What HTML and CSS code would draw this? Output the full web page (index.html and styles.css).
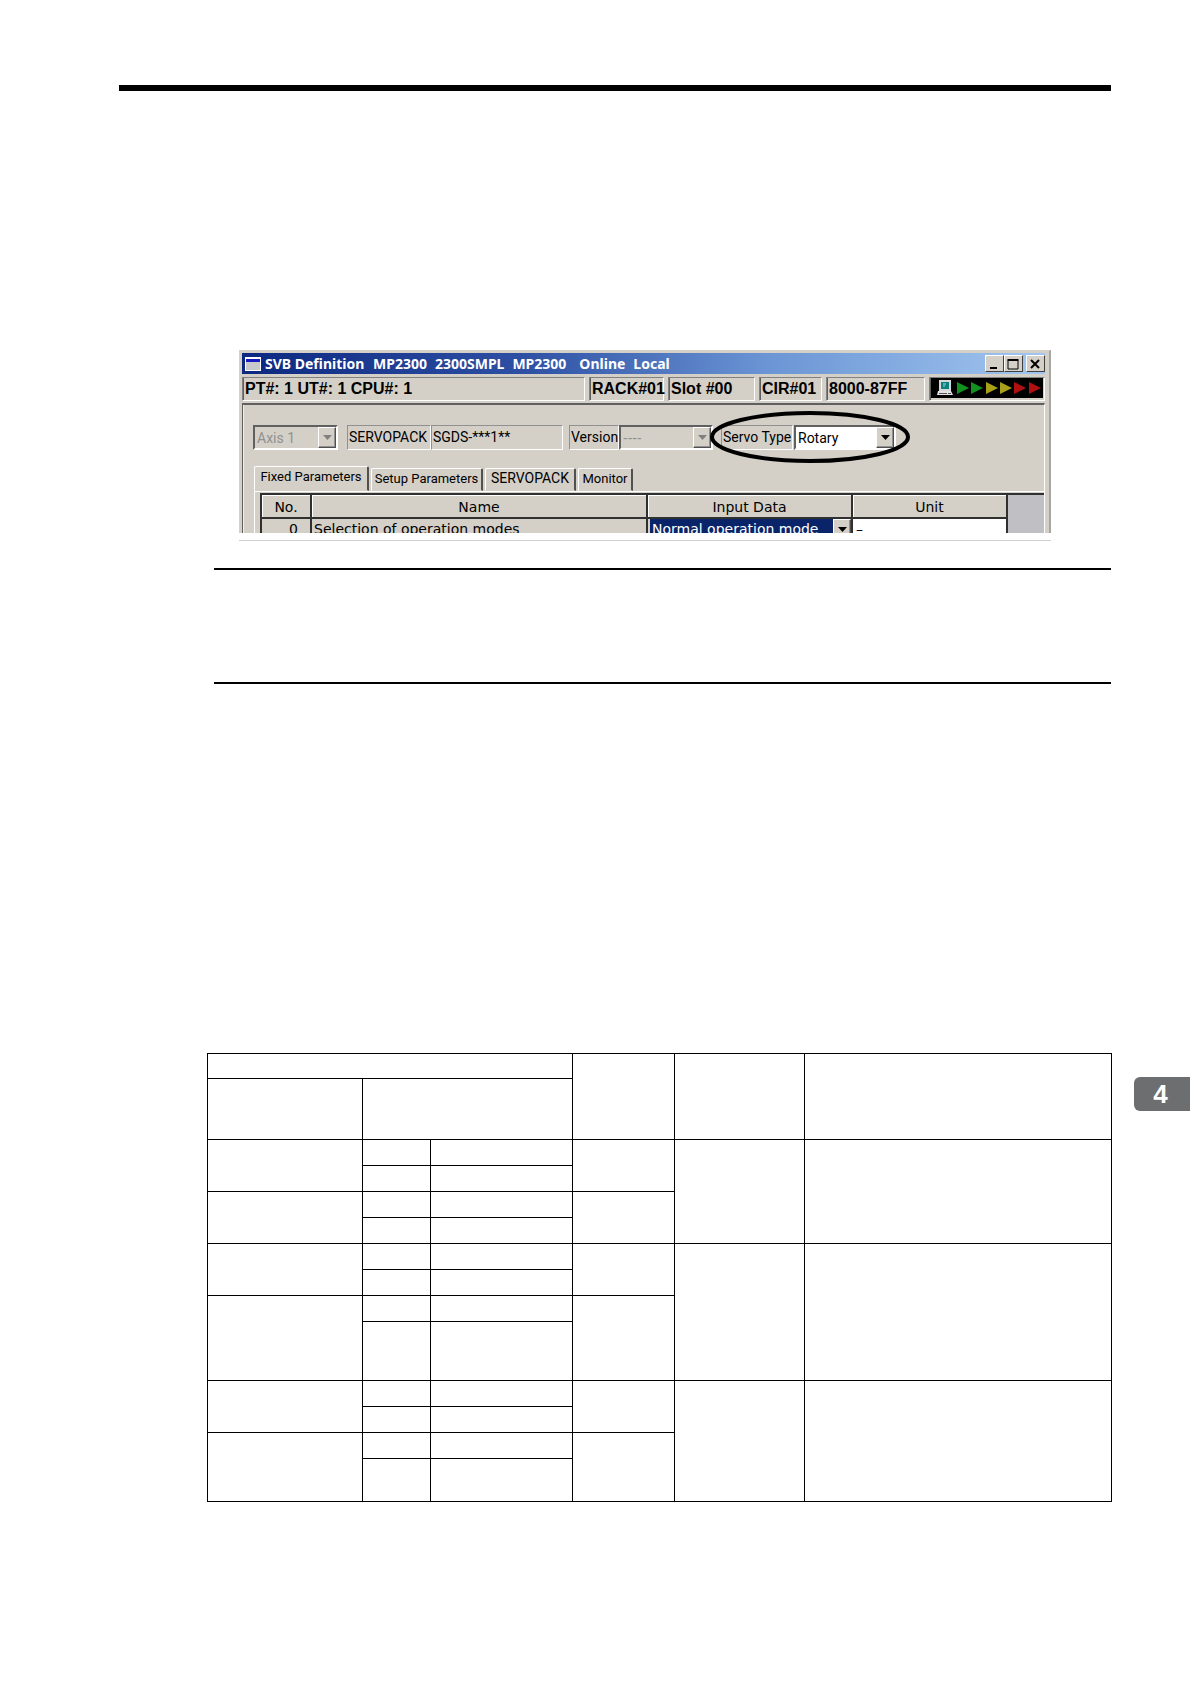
FILE: index.html
```html
<!DOCTYPE html>
<html lang="en">
<head>
<meta charset="utf-8">
<meta name="viewport" content="width=device-width, initial-scale=1">
<title>SVB Definition</title>
<link rel="stylesheet" href="styles.css">
</head>
<body>
<main class="page">
  <hr class="rule-top">

  <figure class="figure">
    <div class="window">
      <header class="titlebar">
        <span class="app-icon"></span>
        <h1 class="title">
          <span class="title-name">SVB Definition</span>
          <span>MP2300</span>
          <span>2300SMPL</span>
          <span class="title-cpu">MP2300</span>
          <span>Online</span>
          <span>Local</span>
        </h1>
        <div class="caption-buttons">
          <button type="button" class="caption-button" aria-label="Minimize"><svg width="18" height="16"><path d="M5 12h7" stroke="#000" stroke-width="2"/></svg></button>
          <button type="button" class="caption-button" aria-label="Maximize"><svg width="18" height="16"><path d="M4 4.500V13h10V4.500" fill="none" stroke="#000" stroke-width="1"/><path d="M3.500 4h11" stroke="#000" stroke-width="2"/></svg></button>
          <button type="button" class="caption-button caption-close" aria-label="Close"><svg width="18" height="16"><path d="M5 4l8 8M13 4l-8 8" stroke="#000" stroke-width="2"/></svg></button>
        </div>
      </header>

      <div class="status">
        <span class="status-cell status-main">PT#: 1 UT#: 1 CPU#: 1</span>
        <span class="status-cell status-rack">RACK#01</span>
        <span class="status-cell status-slot">Slot #00</span>
        <span class="status-cell status-cir">CIR#01</span>
        <span class="status-cell status-range">8000-87FF</span>
        <span class="status-cell status-link">
          <svg width="112" height="20" viewBox="0 0 112 20">
            <rect width="112" height="20" fill="#000"/>
            <rect x="8" y="2" width="12" height="11" fill="#d8d8d8"/>
            <rect x="10" y="4" width="8" height="7" fill="#0a8080"/>
            <path d="M12 6h3M12 8h2" stroke="#9fe0e0"/>
            <path d="M7 13h13l2 4H6z" fill="#e4e4e4"/>
            <path d="M8 15.500h8M17 15.500h3" stroke="#555"/>
            <path d="M26 4l12 6-12 6zM40 4l12 6-12 6z" fill="#129020"/>
            <path d="M55 4l12 6-12 6zM69 4l12 6-12 6z" fill="#a8a018"/>
            <path d="M83 4l12 6-12 6zM98 4l12 6-12 6z" fill="#b01010"/>
          </svg>
        </span>
      </div>

      <div class="panel">
        <form class="toolbar">
          <span class="combo combo-axis is-disabled">
            <select aria-label="Axis" disabled><option>Axis 1</option></select>
            <span class="arrow"><svg width="9" height="5"><path d="M0 0h9L4.500 5z"/></svg></span>
          </span>
          <span class="readouts">
            <span class="sunken readout-name">SERVOPACK</span>
            <span class="sunken readout-model">SGDS-***1**</span>
          </span>
          <span class="pair">
            <label class="sunken label-version" for="version">Version</label>
            <span class="combo combo-version is-disabled">
              <select id="version" disabled><option>----</option></select>
              <span class="arrow"><svg width="9" height="5"><path d="M0 0h9L4.500 5z"/></svg></span>
            </span>
          </span>
          <span class="pair pair-servo">
            <label class="sunken label-servo" for="servo">Servo Type</label>
            <span class="combo combo-servo">
              <select id="servo"><option>Rotary</option><option>Linear</option></select>
              <span class="arrow"><svg width="9" height="5"><path d="M0 0h9L4.500 5z"/></svg></span>
            </span>
            <svg class="callout" width="202" height="54" viewBox="0 0 202 54"><ellipse cx="101" cy="27" rx="98" ry="24" fill="none" stroke="#000" stroke-width="4"/></svg>
          </span>
        </form>

        <div class="tabs" role="tablist">
          <button type="button" role="tab" aria-selected="true" class="tab tab-fixed is-active">Fixed Parameters</button>
          <button type="button" role="tab" aria-selected="false" class="tab tab-setup">Setup Parameters</button>
          <button type="button" role="tab" aria-selected="false" class="tab tab-servopack">SERVOPACK</button>
          <button type="button" role="tab" aria-selected="false" class="tab tab-monitor">Monitor</button>
        </div>

        <div class="sheet">
          <div class="sheet-view">
            <table class="grid">
              <colgroup><col class="g-no"><col><col class="g-input"><col class="g-unit"></colgroup>
              <thead>
                <tr><th>No.</th><th>Name</th><th>Input Data</th><th>Unit</th></tr>
              </thead>
              <tbody>
                <tr>
                  <td class="cell-no">0</td>
                  <td class="cell-name">Selection of operation modes</td>
                  <td>
                    <span class="cell-combo">
                      <select aria-label="Selection of operation modes"><option>Normal operation mode</option></select>
                      <span class="arrow"><svg width="9" height="5"><path d="M0 0h9L4.500 5z"/></svg></span>
                    </span>
                  </td>
                  <td class="cell-unit">–</td>
                </tr>
              </tbody>
            </table>
          </div>
        </div>
      </div>
    </div>
  </figure>

  <section class="note"></section>

  <section class="spec">
    <table class="spec-table">
      <colgroup><col class="s-a"><col class="s-b"><col class="s-c"><col class="s-d"><col class="s-e"><col></colgroup>
      <tbody>
        <tr class="r-title"><td colspan="3"></td><td rowspan="2"></td><td rowspan="2"></td><td rowspan="2"></td></tr>
        <tr class="r-head"><td></td><td colspan="2"></td></tr>
        <tr><td rowspan="2"></td><td></td><td></td><td rowspan="2"></td><td rowspan="4"></td><td rowspan="4"></td></tr>
        <tr><td></td><td></td></tr>
        <tr><td rowspan="2"></td><td></td><td></td><td rowspan="2"></td></tr>
        <tr><td></td><td></td></tr>
        <tr><td rowspan="2"></td><td></td><td></td><td rowspan="2"></td><td rowspan="4"></td><td rowspan="4"></td></tr>
        <tr><td></td><td></td></tr>
        <tr><td rowspan="2"></td><td></td><td></td><td rowspan="2"></td></tr>
        <tr class="r-tall"><td></td><td></td></tr>
        <tr><td rowspan="2"></td><td></td><td></td><td rowspan="2"></td><td rowspan="4"></td><td rowspan="4"></td></tr>
        <tr><td></td><td></td></tr>
        <tr><td rowspan="2"></td><td></td><td></td><td rowspan="2"></td></tr>
        <tr class="r-mid"><td></td><td></td></tr>
      </tbody>
    </table>
    <aside class="chapter">4</aside>
  </section>
</main>
</body>
</html>
```

FILE: styles.css
```css
* { box-sizing: border-box; }

body {
  margin: 0;
  background: #fff;
  color: #000;
  font-family: Roboto, "Liberation Sans", sans-serif;
  font-size: 14px;
}

button, select { font: inherit; color: inherit; }

.page { padding: 85px 0 182px 119px; }

.rule-top {
  height: 6px;
  margin: 0 79px 259px 0;
  border: 0;
  background: #000;
}

/* Application window, cut off below its first grid row */
.figure {
  margin: 0 139px 27px 120px;
  padding-bottom: 7px;
  border-bottom: 1px solid #d0d0d0;
}

.window {
  height: 183px;
  overflow: hidden;
  padding: 2px 4px 0 3px;
  border-right: 2px solid #a8a6a2;
  border-top: 1px solid #d4d0c8;
  background: #d4d0c8;
}

.titlebar {
  display: flex;
  align-items: center;
  height: 21px;
  padding-left: 3px;
  background: linear-gradient(to right, #0c2880, #2e50a4 35%, #6a94d4 65%, #a2c6f0);
}

.app-icon {
  width: 16px;
  height: 14px;
  border: 1px solid #fff;
  border-top: 2px solid #fff;
  background: linear-gradient(#1818c0 3px, #c8c8cc 3px);
}

.title {
  flex: 1;
  display: flex;
  gap: 8px;
  margin: 0 0 0 4px;
  color: #fff;
  font: bold 14px/20px "Noto Sans", sans-serif;
  white-space: nowrap;
}

.title-name { width: 100px; }
.title-cpu { margin-right: 5px; }

.caption-buttons { display: flex; }

.caption-button {
  width: 19px;
  height: 17px;
  padding: 0;
  border: 1px solid;
  border-color: #fff #404040 #404040 #fff;
  background: #d4d0c8;
}

.caption-button svg { display: block; margin: -1px; }
.caption-close { margin-left: 3px; }

.status {
  display: flex;
  gap: 4px;
  padding: 3px 0 2px;
}

.status-cell {
  height: 24px;
  padding-left: 2px;
  border: 1px solid;
  border-color: #808080 #fff #fff #808080;
  box-shadow: inset 1px 0 #606060;
  font: bold 16px/22px "Liberation Sans", sans-serif;
  white-space: nowrap;
}

.status-main { flex: 1; }
.status-rack { width: 75px; }
.status-slot { width: 87px; }
.status-cir { width: 63px; }
.status-range { width: 99px; }
.status-link { width: 116px; padding: 0 1px; }
.status-link svg { display: block; }

.panel {
  border-top: 2px solid #606060;
  border-left: 1px solid #606060;
  border-right: 1px solid #fff;
  box-shadow: inset 1px 0 #eee;
}

.toolbar {
  display: flex;
  padding: 20px 0 16px 10px;
}

.sunken {
  height: 25px;
  padding-left: 1px;
  border: 1px solid;
  border-color: #909090 #fff #fff #909090;
  line-height: 23px;
  white-space: nowrap;
}

.combo {
  display: flex;
  height: 25px;
  border: 2px solid;
  border-color: #606060 #fff #fff #606060;
  background: #fff;
}

.combo select, .cell-combo select {
  flex: 1;
  min-width: 0;
  padding: 0 0 0 2px;
  border: 0;
  background: none;
  appearance: none;
  outline: 0;
}

.arrow {
  display: flex;
  align-items: center;
  justify-content: center;
  width: 18px;
  border: 1px solid;
  border-color: #fff #505050 #505050 #fff;
  box-shadow: inset -1px -1px #909090;
  background: #d4d0c8;
}

.is-disabled { background: #d4d0c8; }
.is-disabled select { color: #909090; opacity: 1; }
.is-disabled path { fill: #808080; }

.combo-axis { width: 85px; }
.readouts { display: flex; margin-left: 9px; }
.readout-name { width: 84px; }
.readout-model { width: 132px; }
.pair { display: flex; margin-left: 6px; }
.label-version { width: 50px; }
.combo-version { width: 94px; font-family: "Liberation Sans", sans-serif; }
.pair-servo { position: relative; margin-left: 8px; }
.label-servo { width: 72px; }
.combo-servo { width: 102px; margin-left: 1px; }

/* Ring drawn over the Servo Type field */
.callout {
  position: absolute;
  left: -12px;
  top: -15px;
  pointer-events: none;
}

.tabs {
  display: flex;
  align-items: flex-end;
  gap: 2px;
  height: 25px;
  padding-left: 11px;
}

.tab {
  height: 23px;
  padding: 0 0 3px;
  border: 1px solid;
  border-color: #fff #505050 transparent #fff;
  border-right-width: 2px;
  border-radius: 2px 2px 0 0;
  background: none;
  font-size: 13px;
  white-space: nowrap;
}

.tab-fixed { width: 115px; }
.tab-setup { width: 112px; }
.tab-servopack { width: 91px; font-size: 14px; }
.tab-monitor { width: 55px; }
.tab.is-active { height: 25px; padding-bottom: 4px; }

.sheet {
  margin-left: 11px;
  padding: 1px 0 0 5px;
  border-top: 1px solid #fff;
  border-left: 1px solid #fff;
}

.sheet-view {
  padding-right: 36px;
  border-top: 2px solid #303030;
  border-left: 1px solid #303030;
  background: #c0c0c4;
}

.grid {
  width: 100%;
  border-collapse: separate;
  border-spacing: 0;
  table-layout: fixed;
  border-left: 1px solid #303030;
  background: #d4d0c8;
  font: 14px/20px "DejaVu Sans", sans-serif;
}

.g-no { width: 50px; }
.g-input { width: 205px; }
.g-unit { width: 155px; }

.grid th, .grid td {
  height: 20px;
  padding: 0;
  border-right: 2px solid #303030;
  white-space: nowrap;
}

.grid th {
  height: 24px;
  padding-top: 2px;
  border-bottom: 2px solid #303030;
  box-shadow: inset 1px 1px #fff;
  font-weight: normal;
}

.grid .cell-no { padding-right: 12px; text-align: right; }
.grid .cell-name { padding-left: 2px; }
.grid .cell-unit { padding-left: 3px; background: #fff; }

.cell-combo {
  display: flex;
  height: 20px;
  margin-left: 2px;
  background: #0a246a;
  color: #fff;
}

.note {
  height: 116px;
  margin: 0 79px 369px 95px;
  border: solid #000;
  border-width: 2px 0;
}

.spec {
  display: flex;
  align-items: flex-start;
  margin-left: 88px;
}

.spec-table {
  flex: 1;
  border-collapse: collapse;
  table-layout: fixed;
}

.spec-table tr { height: 26px; }
.spec-table td { padding: 0; border: 1px solid #000; }
.spec-table .r-title { height: 25px; }
.spec-table .r-head { height: 61px; }
.spec-table .r-tall { height: 59px; }
.spec-table .r-mid { height: 43px; }

.s-a { width: 155px; }
.s-b { width: 68px; }
.s-c { width: 142px; }
.s-d { width: 102px; }
.s-e { width: 130px; }

/* Chapter thumb index at the page edge */
.chapter {
  width: 56px;
  margin: 24px 0 0 22px;
  padding-right: 3px;
  border-radius: 6px 0 0 6px;
  background: #6c6e6f;
  color: #fff;
  font: bold 26px/34px "Liberation Sans", sans-serif;
  text-align: center;
}
```
